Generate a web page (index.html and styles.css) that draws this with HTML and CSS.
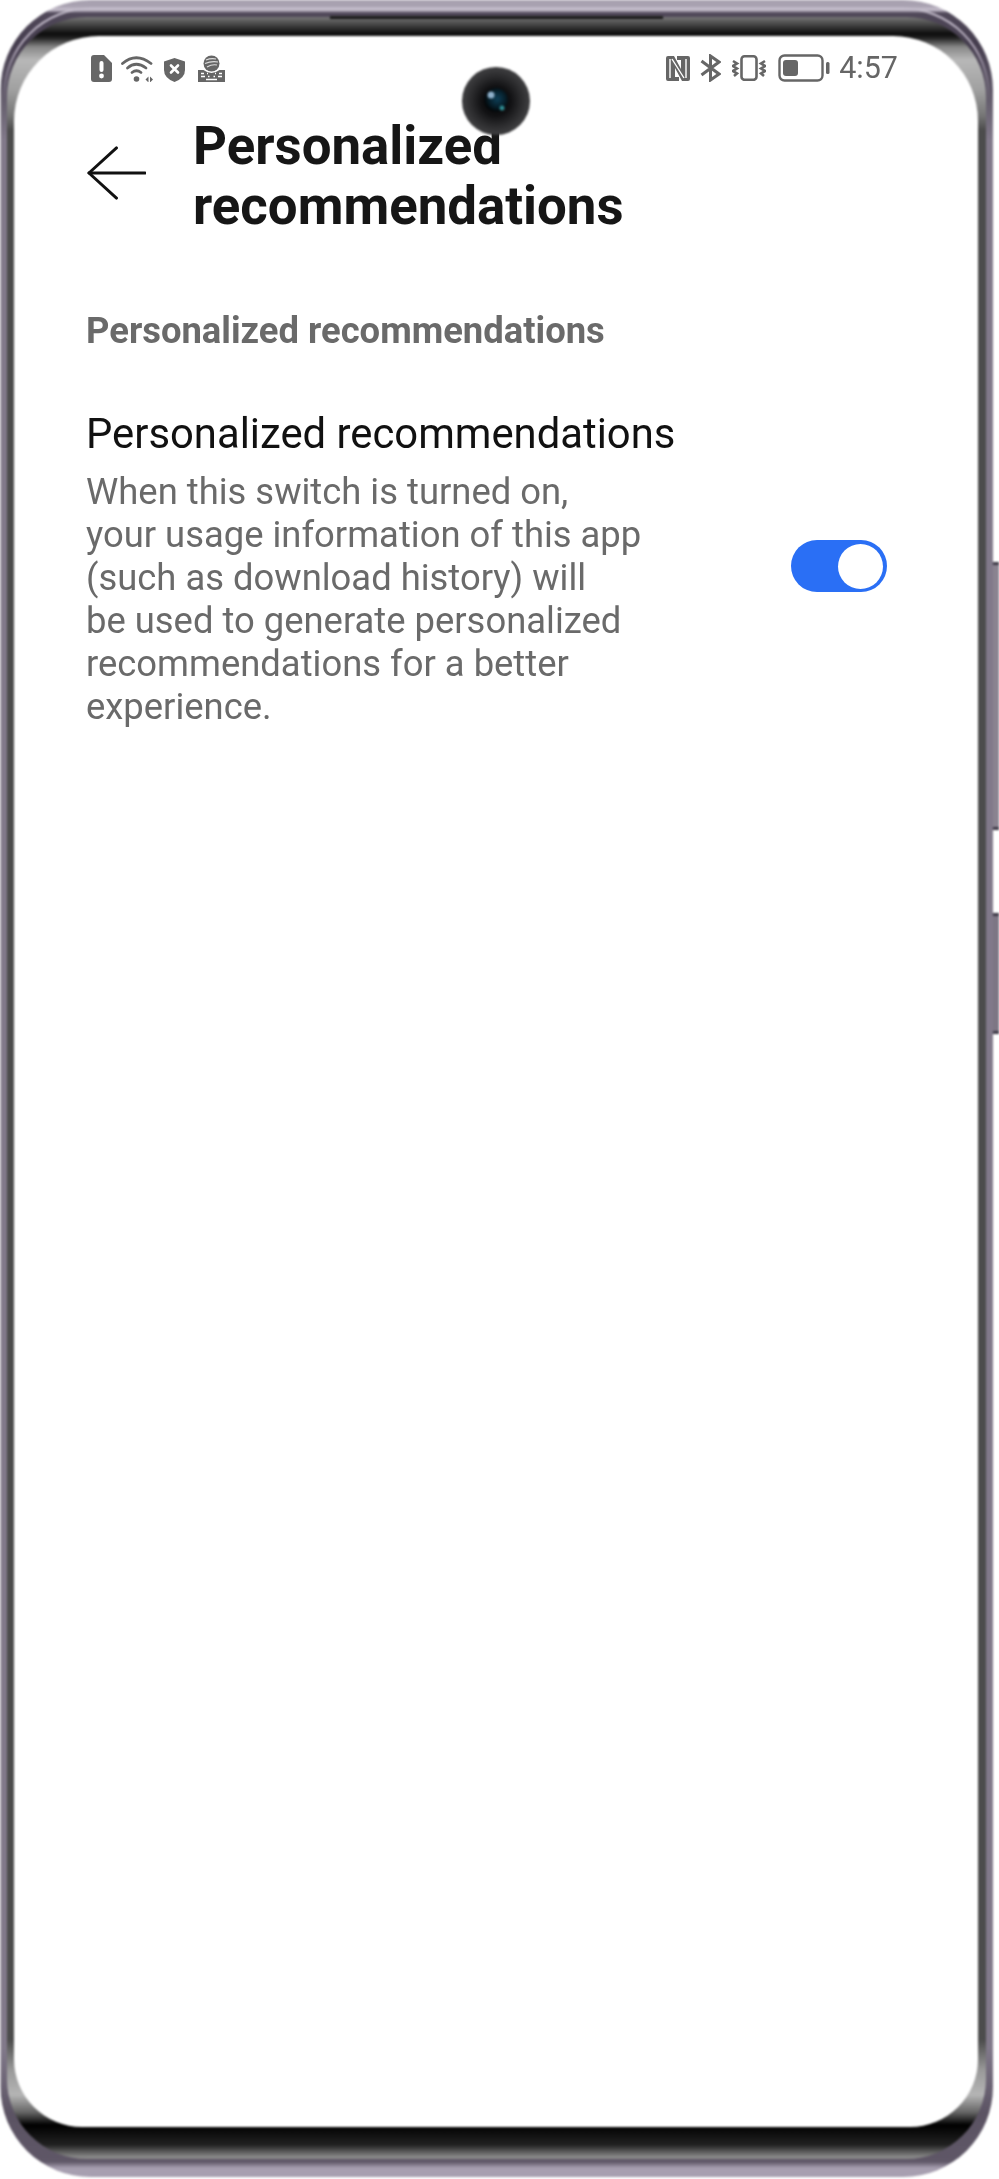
FILE: index.html
```html
<!DOCTYPE html>
<html lang="en">
<head>
<meta charset="utf-8">
<title>Personalized recommendations</title>
<link rel="stylesheet" href="styles.css">
</head>
<body>
<div class="phone">
  <svg class="frame" width="999" height="2179" viewBox="0 0 999 2179" aria-hidden="true">
    <defs>
      <linearGradient id="shell" gradientUnits="userSpaceOnUse" x1="0" y1="0" x2="0" y2="2179">
        <stop offset="0.0028" stop-color="#a8a1b0"/>
        <stop offset="0.0046" stop-color="#c9c2d0"/>
        <stop offset="0.0060" stop-color="#51495a"/>
        <stop offset="0.0200" stop-color="#453d4e"/>
        <stop offset="0.0500" stop-color="#6a6372"/>
        <stop offset="0.0640" stop-color="#81798a"/>
        <stop offset="0.9400" stop-color="#81798a"/>
        <stop offset="0.9700" stop-color="#5b5363"/>
        <stop offset="0.9920" stop-color="#5f5767"/>
        <stop offset="0.9950" stop-color="#a79fb0"/>
        <stop offset="1" stop-color="#a79fb0"/>
      </linearGradient>
      <linearGradient id="band" gradientUnits="userSpaceOnUse" x1="0" y1="0" x2="0" y2="2179">
        <stop offset="0.0078" stop-color="#777"/>
        <stop offset="0.0101" stop-color="#555"/>
        <stop offset="0.0156" stop-color="#0c0c0c"/>
        <stop offset="0.0174" stop-color="#222"/>
        <stop offset="0.0216" stop-color="#888"/>
        <stop offset="0.0275" stop-color="#b8b8b8"/>
        <stop offset="0.0413" stop-color="#a0a0a0"/>
        <stop offset="0.0528" stop-color="#777"/>
        <stop offset="0.0597" stop-color="#4c4c4c"/>
        <stop offset="0.9362" stop-color="#4c4c4c"/>
        <stop offset="0.95" stop-color="#999"/>
        <stop offset="0.9614" stop-color="#b5b5b5"/>
        <stop offset="0.9693" stop-color="#666"/>
        <stop offset="0.9752" stop-color="#000"/>
        <stop offset="0.9844" stop-color="#222"/>
        <stop offset="0.9899" stop-color="#888"/>
      </linearGradient>
      <linearGradient id="streak" gradientUnits="userSpaceOnUse" x1="0" y1="0" x2="0" y2="100">
        <stop offset="0" stop-color="#c9c2d0"/>
        <stop offset="0.5" stop-color="#a89fb0"/>
        <stop offset="1" stop-color="#a89fb0" stop-opacity="0"/>
      </linearGradient>
    </defs>
    <g class="frame-soft">
      <rect x="985" y="563" width="14" height="266" fill="#8a8390"/>
      <rect x="985" y="914" width="14" height="118" fill="#7d7684"/>
      <rect x="992" y="562" width="7" height="3" fill="#3d3845"/>
      <rect x="992" y="827" width="7" height="3" fill="#3d3845"/>
      <rect x="992" y="913" width="7" height="3" fill="#3d3845"/>
      <rect x="992" y="1031" width="7" height="3" fill="#3d3845"/>
      <rect x="0.500" y="0" width="992.500" height="2177" rx="90" fill="url(#shell)"/>
      <rect x="4.500" y="8.500" width="984" height="2160" rx="86" fill="none" stroke="url(#streak)" stroke-width="2"/>
      <rect x="7" y="17" width="979" height="2142" rx="80" fill="url(#band)"/>
      <path d="M99 36H893A85 85 0 0 1 978 121V2059A68 68 0 0 1 910 2127H82A68 68 0 0 1 14 2059V121A85 85 0 0 1 99 36Z" fill="#fff"/>
    </g>
    <rect class="frame-soft" x="330" y="16" width="333" height="3" fill="#1a1a1a"/>
  </svg>

  <svg class="camera" width="72" height="72" viewBox="0 0 72 72" aria-hidden="true">
    <defs>
      <radialGradient id="housing" cx="0.5" cy="0.5" r="0.5">
        <stop offset="0" stop-color="#0a0a0b"/>
        <stop offset="0.42" stop-color="#101012"/>
        <stop offset="0.72" stop-color="#2a2a2c"/>
        <stop offset="0.95" stop-color="#3c3c3e"/>
        <stop offset="1" stop-color="#333335"/>
      </radialGradient>
      <radialGradient id="lens" cx="0.55" cy="0.45" r="0.55">
        <stop offset="0" stop-color="#0e3f58"/>
        <stop offset="0.6" stop-color="#07202c"/>
        <stop offset="1" stop-color="#030507"/>
      </radialGradient>
    </defs>
    <circle cx="36" cy="36" r="34" fill="url(#housing)"/>
    <circle cx="36" cy="35" r="12" fill="url(#lens)"/>
    <circle cx="31" cy="30" r="3.500" fill="#8fb0cb"/>
    <circle cx="42" cy="43" r="2.500" fill="#2f8a90"/>
  </svg>

  <div class="status">
    <div class="status-group">
      <svg class="ic" width="21" height="27" viewBox="0 0 21 27"><path d="M3 0H13L21 8V24Q21 27 18 27H3Q0 27 0 24V3Q0 0 3 0Z" fill="#666"/><rect x="8.500" y="6" width="4" height="11" rx="2" fill="#fff"/><circle cx="10.500" cy="21" r="2.400" fill="#fff"/></svg>
      <svg class="ic gap-9" width="32" height="27" viewBox="0 0 32 27" fill="none" stroke="#666" stroke-width="2.800" stroke-linecap="round"><path d="M1.500 8.500Q15-3 30 8.500"/><path d="M6.500 13Q15 5.500 25 13"/><path d="M11 17.500Q15.500 14 20 17.500"/><circle cx="15.500" cy="24" r="2.800" fill="#666" stroke="none"/><path d="M24.500 24.500l3-3v6z" fill="#666" stroke="none"/><path d="M29 21.500l3 3-3 3z" fill="#666" stroke="none"/></svg>
      <svg class="ic gap-11 shield" width="21" height="24" viewBox="0 0 21 24"><path d="M10.500 0L21 3.500V12Q21 20 10.500 24Q0 20 0 12V3.500Z" fill="#666"/><path d="M7 7.500L14 14.500M14 7.500L7 14.500" stroke="#fff" stroke-width="2.600" stroke-linecap="round"/></svg>
      <svg class="ic gap-13" width="27" height="27" viewBox="0 0 27 27"><circle cx="13.500" cy="8.500" r="8" fill="#666"/><path d="M8 5Q13 3 18 4M7 8.500Q13 6 20 7M9 12Q14 9 19 10" stroke="#ddd" stroke-width="1.200" fill="none"/><path d="M0 15H5.500Q13.500 21 21.500 15H27V27H0Z" fill="#666"/><path d="M3 18.500H6M9 18.500H10M17 18.500H18M21 18.500H24M3 21.500H7M10 21.500H11.500M15.500 21.500H17M20 21.500H24M8 24.500H19" stroke="#fff" stroke-width="1.500"/></svg>
    </div>
    <div class="status-group">
      <svg class="ic" width="24" height="25" viewBox="0 0 24 25"><path d="M2 0H8L15 13V4H11V0H22Q24 0 24 2V23Q24 25 22 25H16L9 12V21H13V25H2Q0 25 0 23V2Q0 0 2 0Z" fill="#666"/><path d="M4 3V22M20 3V22M6 3L18 22" stroke="#fff" stroke-width="1.400" fill="none"/></svg>
      <svg class="ic gap-10" width="21" height="28" viewBox="0 0 21 28" fill="none" stroke="#666" stroke-width="3"><path d="M1.500 7L19 20L10.500 26V2L19 8L1.500 21"/></svg>
      <svg class="ic gap-11" width="34" height="26" viewBox="0 0 34 26" fill="none" stroke="#666" stroke-width="2.600"><rect x="9.500" y="1.300" width="15" height="23.500" rx="3"/><path d="M1 6L5 8.500L1 11L5 13.500L1 16L5 18.500L2 21"/><path d="M33 6L29 8.500L33 11L29 13.500L33 16L29 18.500L32 21"/></svg>
      <svg class="ic gap-12" width="52" height="28" viewBox="0 0 52 28"><rect x="1.500" y="1.500" width="43" height="25" rx="5" fill="none" stroke="#666" stroke-width="2.400"/><rect x="5" y="6" width="15" height="16" rx="3" fill="#666"/><rect x="48" y="8" width="3.500" height="12" rx="1.500" fill="#666"/></svg>
      <span class="time">4:57</span>
    </div>
  </div>

  <header class="topbar">
    <svg class="back" width="59" height="54" viewBox="0 0 60 54" fill="none" stroke="#111" stroke-width="3" stroke-linecap="round" stroke-linejoin="round"><path d="M59 27H2"/><path d="M30 1.500L2 27L30 52.500"/></svg>
    <h1 class="title">Personalized recommendations</h1>
  </header>

  <main class="content">
    <h2 class="section">Personalized recommendations</h2>
    <div class="item">
      <div class="item-text">
        <div class="item-title">Personalized recommendations</div>
        <p class="item-desc">When this switch is turned on,<br>your usage information of this app<br>(such as download history) will<br>be used to generate personalized<br>recommendations for a better<br>experience.</p>
      </div>
      <div class="toggle"><span class="knob"></span></div>
    </div>
  </main>
</div>
</body>
</html>
```

FILE: styles.css
```css
* { box-sizing: border-box; }
html, body { margin: 0; padding: 0; background: #fff; }
body { font-family: Roboto, "Noto Sans", sans-serif; }

.phone {
  position: relative;
  width: 999px;
  height: 2179px;
  overflow: hidden;
  padding: 54px 104px 0 86px;
}
.frame { position: absolute; left: 0; top: 0; }
.frame-soft { filter: blur(0.8px); }
.camera { position: absolute; left: 460px; top: 65px; z-index: 3; filter: blur(0.8px); }

.status {
  position: relative;
  z-index: 1;
  display: flex;
  justify-content: space-between;
  align-items: center;
  height: 28px;
  padding-left: 5px;
  margin-right: -3px;
  filter: blur(0.4px);
}
.status-group { display: flex; align-items: center; }
.ic { display: block; flex: none; }
.gap-9 { margin-left: 9px; }
.gap-10 { margin-left: 10px; }
.gap-11 { margin-left: 11px; }
.gap-12 { margin-left: 12px; }
.gap-13 { margin-left: 13px; }
.shield { margin-top: 3px; }
.time { margin-left: 9px; font-size: 30.500px; line-height: 28px; color: #666; }

.topbar {
  position: relative;
  z-index: 1;
  display: flex;
  align-items: flex-start;
  margin-top: 34px;
  filter: blur(0.3px);
}
.back { flex: none; margin: 30px 47px 0 1px; }
.title {
  margin: 0;
  width: 520px;
  font-size: 52.800px;
  line-height: 60px;
  font-weight: 700;
  color: #161616;
}
.content { position: relative; z-index: 1; margin-top: 73px; filter: blur(0.3px); }
.section {
  margin: 0;
  font-size: 36.400px;
  line-height: 44px;
  font-weight: 700;
  color: #6a6a6a;
}
.item {
  display: flex;
  justify-content: space-between;
  align-items: center;
  margin-top: 53px;
  margin-right: 8px;
}
.item-title { font-size: 41.800px; line-height: 56px; color: #111; }
.item-desc { margin: 8px 0 0; font-size: 36.400px; line-height: 43px; color: #6a6a6a; }
.toggle {
  position: relative;
  width: 96px;
  height: 52px;
  border-radius: 26px;
  background: #2a6ff5;
  margin-top: -2px;
}
.knob {
  position: absolute;
  right: 4px;
  top: 4px;
  width: 45px;
  height: 45px;
  border-radius: 50%;
  background: #fff;
}
```
